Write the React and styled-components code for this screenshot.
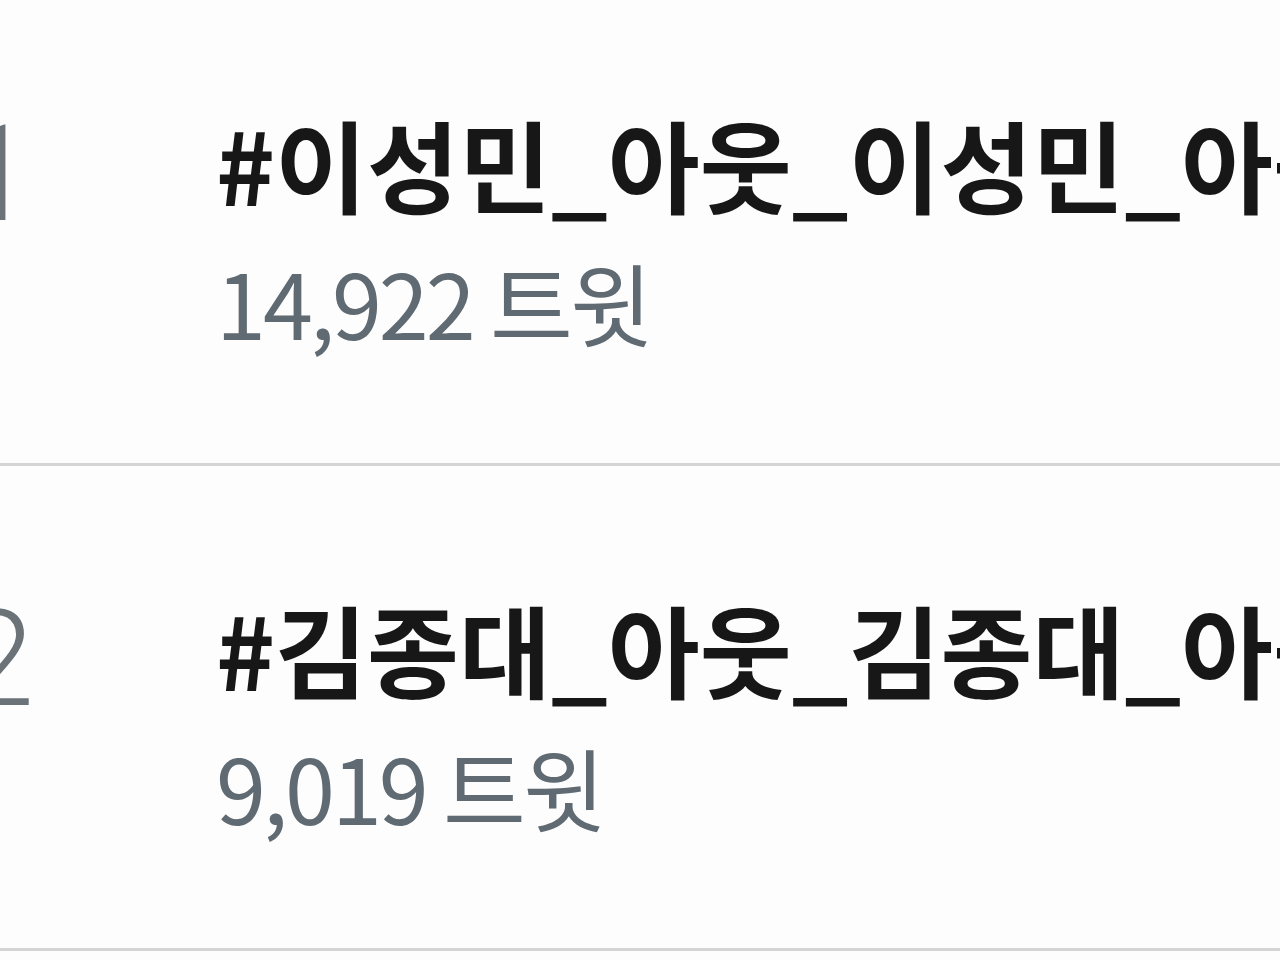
import React from "react";
import styled, { createGlobalStyle } from "styled-components";

const Global = createGlobalStyle`
  html, body { margin: 0; padding: 0; background: #fdfdfd; }
  body { font-family: "Noto Sans CJK KR", "Noto Sans", sans-serif; overflow: hidden; }
`;

const Page = styled.div`
  width: 1280px;
  height: 960px;
  overflow: hidden;
  background: #fdfdfd;
`;

const List = styled.ul`
  list-style: none;
  margin: -19px 0 0 0;
  padding: 0;
`;

const Row = styled.li`
  display: grid;
  grid-template-columns: 216px 1fr;
  height: 485px;
  box-sizing: border-box;
  padding-top: 127px;
  border-bottom: 3px solid #d4d4d4;
  overflow: hidden;
`;

const Rank = styled.div`
  margin-left: -40px;
  padding-top: 12px;
  font-family: Roboto, "Noto Sans", sans-serif;
  font-weight: 300;
  font-size: 134px;
  line-height: 110px;
  color: #6b7378;
`;

const Body = styled.div`
  min-width: 0;
  display: flex;
  flex-direction: column;
  gap: 33px;
`;

const Title = styled.div`
  font-family: "Noto Sans CJK KR", sans-serif;
  font-weight: 700;
  font-size: 100px;
  line-height: 110px;
  color: #171717;
  white-space: nowrap;
`;

const Count = styled.div`
  font-family: "Noto Sans CJK KR", sans-serif;
  font-weight: 400;
  font-size: 90px;
  line-height: 100px;
  color: #5f6a72;
  white-space: nowrap;
  letter-spacing: -3px;
`;

const trends = [
  { rank: 1, tag: "#이성민_아웃_이성민_아웃", count: "14,922 트윗" },
  { rank: 2, tag: "#김종대_아웃_김종대_아웃", count: "9,019 트윗" },
];

export default function App() {
  return (
    <Page>
      <Global />
      <List>
        {trends.map((t) => (
          <Row key={t.rank}>
            <Rank>{t.rank}</Rank>
            <Body>
              <Title>{t.tag}</Title>
              <Count>{t.count}</Count>
            </Body>
          </Row>
        ))}
      </List>
    </Page>
  );
}
